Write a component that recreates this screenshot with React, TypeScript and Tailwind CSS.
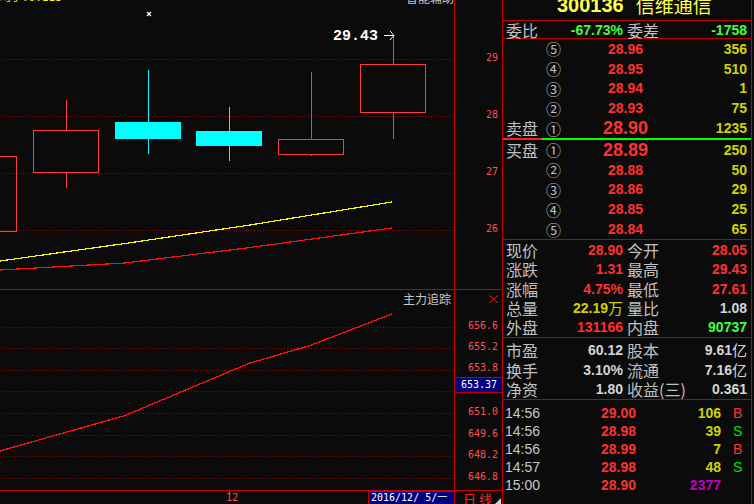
import React from "react";

const NUM = "font-['Liberation_Sans',sans-serif] font-bold text-[14px] leading-none";
const CJK = "font-['Noto_Sans_CJK_SC',sans-serif] text-[16px] leading-none text-[#c0c0c0]";
const AXIS = "font-['DejaVu_Sans_Mono',monospace] text-[10px] leading-none text-[#ff5050]";

type Order = { n: string; p: string; v: string; label?: string; big?: boolean };

const sells: Order[] = [
  { n: "⑤", p: "28.96", v: "356" },
  { n: "④", p: "28.95", v: "510" },
  { n: "③", p: "28.94", v: "1" },
  { n: "②", p: "28.93", v: "75" },
  { n: "①", p: "28.90", v: "1235", label: "卖盘", big: true },
];
const buys: Order[] = [
  { n: "①", p: "28.89", v: "250", label: "买盘", big: true },
  { n: "②", p: "28.88", v: "50" },
  { n: "③", p: "28.86", v: "29" },
  { n: "④", p: "28.85", v: "25" },
  { n: "⑤", p: "28.84", v: "65" },
];

const RED = "text-[#ff3030]";
const YEL = "text-[#d2d200]";
const GRN = "text-[#40ff40]";
const WHT = "text-[#d4d4d4]";

type Stat = { l1: string; v1: string; c1: string; u1?: string; l2: string; v2: string; c2: string; u2?: string };

const stats1: Stat[] = [
  { l1: "现价", v1: "28.90", c1: RED, l2: "今开", v2: "28.05", c2: RED },
  { l1: "涨跌", v1: "1.31", c1: RED, l2: "最高", v2: "29.43", c2: RED },
  { l1: "涨幅", v1: "4.75%", c1: RED, l2: "最低", v2: "27.61", c2: RED },
  { l1: "总量", v1: "22.19", u1: "万", c1: YEL, l2: "量比", v2: "1.08", c2: WHT },
  { l1: "外盘", v1: "131166", c1: RED, l2: "内盘", v2: "90737", c2: GRN },
];
const stats2: Stat[] = [
  { l1: "市盈", v1: "60.12", c1: WHT, l2: "股本", v2: "9.61", u2: "亿", c2: WHT },
  { l1: "换手", v1: "3.10%", c1: WHT, l2: "流通", v2: "7.16", u2: "亿", c2: WHT },
  { l1: "净资", v1: "1.80", c1: WHT, l2: "收益(三)", v2: "0.361", c2: WHT },
];

const ticks = [
  { t: "14:56", p: "29.00", v: "106", vc: YEL, s: "B", sc: "text-[#ff3030]" },
  { t: "14:56", p: "28.98", v: "39", vc: YEL, s: "S", sc: "text-[#00e000]" },
  { t: "14:56", p: "28.99", v: "7", vc: YEL, s: "B", sc: "text-[#ff3030]" },
  { t: "14:57", p: "28.98", v: "48", vc: YEL, s: "S", sc: "text-[#00e000]" },
  { t: "15:00", p: "28.90", v: "2377", vc: "text-[#c000c0]", s: "", sc: "" },
];

function OrderRow({ o }: { o: Order }) {
  return (
    <div className="flex flex-1 items-center pl-[3px] pr-[4px]">
      <span className={`${CJK} w-[40px]`}>{o.label ?? ""}</span>
      <span className="w-[15px] font-['Noto_Sans_CJK_SC',sans-serif] text-[15px] leading-none text-[#c0c0c0]">{o.n}</span>
      {o.big ? (
        <span className="w-[87px] text-right font-['Liberation_Sans',sans-serif] font-bold text-[18px] leading-none text-[#ff3030]">{o.p}</span>
      ) : (
        <span className={`${NUM} w-[82px] text-right ${RED}`}>{o.p}</span>
      )}
      <span className={`${NUM} flex-1 text-right ${YEL}`}>{o.v}</span>
    </div>
  );
}

function StatRow({ s }: { s: Stat }) {
  return (
    <div className="flex flex-1 items-center pl-[3px] pr-[4px]">
      <span className={`${CJK} w-[36px]`}>{s.l1}</span>
      <span className={`w-[81px] flex items-center justify-end ${s.c1}`}>
        <span className={NUM}>{s.v1}</span>
        {s.u1 && <span className="font-['Noto_Sans_CJK_SC',sans-serif] text-[15px] leading-none">{s.u1}</span>}
      </span>
      <span className={`${CJK} ml-[4px]`}>{s.l2}</span>
      <span className={`flex-1 flex items-center justify-end ${s.c2}`}>
        <span className={NUM}>{s.v2}</span>
        {s.u2 && <span className="font-['Noto_Sans_CJK_SC',sans-serif] text-[15px] leading-none">{s.u2}</span>}
      </span>
    </div>
  );
}

const candleRed = "#ff3b3b";
const cyan = "#00ffff";

function TopChart() {
  return (
    <div className="relative w-[454px] h-full overflow-hidden">
      <svg width="454" height="289" className="absolute left-0 top-0" shapeRendering="crispEdges">
        {[59, 116, 173, 230].map((y) => (
          <line key={y} x1={2} x2={454} y1={y + 0.5} y2={y + 0.5} stroke="#b00000" strokeDasharray="1 2" />
        ))}
        {/* candle 1 partial */}
        <rect x={-10} y={156.5} width={25.5 + 0.5} height={74.5} fill="none" stroke={candleRed} />
        {/* candle 2 */}
        <line x1={66.5} x2={66.5} y1={100} y2={130} stroke={candleRed} />
        <line x1={66.5} x2={66.5} y1={172} y2={188} stroke={candleRed} />
        <rect x={33.5} y={130.5} width={65} height={42} fill="none" stroke={candleRed} />
        {/* candle 3 */}
        <line x1={148.5} x2={148.5} y1={70} y2={154} stroke={cyan} />
        <rect x={115} y={122} width={66} height={17} fill={cyan} />
        {/* candle 4 */}
        <line x1={229.5} x2={229.5} y1={107} y2={161} stroke={cyan} />
        <rect x={196} y={131} width={66} height={15} fill={cyan} />
        {/* candle 5 */}
        <line x1={311.5} x2={311.5} y1={72} y2={139} stroke={candleRed} />
        <line x1={311.5} x2={311.5} y1={154} y2={156} stroke={candleRed} />
        <rect x={278.5} y={139.5} width={65} height={15} fill="none" stroke={candleRed} />
        {/* candle 6 */}
        <line x1={393.5} x2={393.5} y1={35} y2={64} stroke={candleRed} />
        <line x1={393.5} x2={393.5} y1={112} y2={139} stroke={candleRed} />
        <rect x={360.5} y={64.5} width={65} height={48} fill="none" stroke={candleRed} />
        {/* MA lines */}
        <polyline points="0,261 125,243.5 250,225 392,202" fill="none" stroke="#ffff00" strokeWidth={1.2} />
        <polyline points="0,270 125,263 250,247.5 392,228" fill="none" stroke="#ff1010" strokeWidth={1.2} />
        {/* arrow */}
        <line x1={384} x2={394} y1={35.5} y2={35.5} stroke="#ffffff" />
        <line x1={390} x2={394} y1={31} y2={35.5} stroke="#ffffff" shapeRendering="auto" />
        <line x1={390} x2={394} y1={40} y2={35.5} stroke="#ffffff" shapeRendering="auto" />
        {/* small cross */}
        <line x1={147} x2={151} y1={12} y2={16} stroke="#ffffff" shapeRendering="auto" strokeWidth={1.3} />
        <line x1={151} x2={147} y1={12} y2={16} stroke="#ffffff" shapeRendering="auto" strokeWidth={1.3} />
      </svg>
      <span className="absolute left-0 top-[-8px] font-['DejaVu_Sans_Mono','Noto_Sans_CJK_SC',monospace] text-[11px] leading-[12px] text-[#ffff00]">
        均手:0.118
      </span>
      <span className="absolute left-[406px] top-[-8px] font-['Noto_Sans_CJK_SC',sans-serif] text-[12px] leading-[12px] text-[#c8c8c8]">
        智能辅助
      </span>
      <span className="absolute left-[333px] top-[29px] font-['Liberation_Mono',monospace] font-bold text-[15px] leading-[15px] text-white">
        29.43
      </span>
    </div>
  );
}

function TopAxis() {
  const labels = [
    { t: "29", y: 58 },
    { t: "28", y: 115 },
    { t: "27", y: 172 },
    { t: "26", y: 229 },
  ];
  return (
    <div className="relative w-[48px] h-full border-l border-[#c80000]">
      {labels.map((l) => (
        <span key={l.t} className={`${AXIS} absolute right-[4px]`} style={{ top: l.y - 5 }}>
          {l.t}
        </span>
      ))}
    </div>
  );
}

function IndChart() {
  const ys = [37, 58, 80, 101, 123, 145, 166, 188];
  return (
    <div className="relative w-[454px] h-full overflow-hidden">
      <svg width="454" height="200" className="absolute left-0 top-0" shapeRendering="crispEdges">
        {ys.map((y) => (
          <line key={y} x1={2} x2={454} y1={y + 0.5} y2={y + 0.5} stroke="#b00000" strokeDasharray="1 2" />
        ))}
        <polyline points="0,161 125,125.5 250,73 310,55.5 392,24" fill="none" stroke="#ff1010" strokeWidth={1.3} />
      </svg>
      <span className="absolute left-[403px] top-[3px] font-['Noto_Sans_CJK_SC',sans-serif] text-[12px] leading-[12px] text-[#c8c8c8]">
        主力追踪
      </span>
    </div>
  );
}

function IndAxis() {
  const labels = [
    { t: "656.6", y: 36 },
    { t: "655.2", y: 57 },
    { t: "653.8", y: 78 },
    { t: "652.4", y: 100 },
    { t: "651.0", y: 122 },
    { t: "649.6", y: 144 },
    { t: "648.2", y: 165 },
    { t: "646.8", y: 187 },
  ];
  return (
    <div className="relative w-[48px] h-full border-l border-[#c80000]">
      <svg width="10" height="9" className="absolute left-[34px] top-[5px]">
        <line x1={0.5} y1={0.5} x2={9} y2={8} stroke="#ff2020" />
        <line x1={9} y1={0.5} x2={0.5} y2={8} stroke="#ff2020" />
      </svg>
      {labels.map((l) => (
        <span key={l.t} className={`${AXIS} absolute right-[4px]`} style={{ top: l.y - 5 }}>
          {l.t}
        </span>
      ))}
      <div className="absolute left-[1px] right-0 top-[87px] h-[16px] bg-[#000080] border-y border-[#c00000] flex items-center justify-center">
        <span className="font-['DejaVu_Sans_Mono',monospace] text-[10px] leading-none text-white">653.37</span>
      </div>
    </div>
  );
}

export default function App() {
  return (
    <div className="w-[754px] h-[504px] bg-[#0b0b0b] flex overflow-hidden select-none">
      {/* left */}
      <div className="w-[502px] flex flex-col">
        <div className="flex h-[290px] border-b border-[#c80000]">
          <TopChart />
          <TopAxis />
        </div>
        <div className="flex h-[201px] border-b border-[#c80000]">
          <IndChart />
          <IndAxis />
        </div>
        <div className="flex h-[13px]">
          <div className="relative w-[454px] h-full">
            <div className="absolute left-[229px] top-0 w-[1px] h-[2px] bg-[#ff5050]" />
            <span className={`${AXIS} absolute left-[226px] top-[2px]`}>12</span>
            <div className="absolute left-[368px] top-0 w-[86px] h-[13px] bg-[#000080] border-l border-t border-[#c80000] flex items-center pl-[2px]">
              <span className="font-['DejaVu_Sans_Mono','Noto_Sans_CJK_SC',monospace] text-[10px] leading-none text-white whitespace-pre">
                2016/12/ 5/一
              </span>
            </div>
          </div>
          <div className="relative w-[48px] h-full border-l border-[#c80000] flex items-start pl-[8px]">
            <span className="font-['Noto_Sans_CJK_SC',sans-serif] text-[13px] leading-[13px] text-[#ff2020] whitespace-pre mt-[1px]">
              日 线
            </span>
            <svg width="6" height="6" className="absolute right-[1px] bottom-0">
              <polygon points="6,0 6,6 0,6" fill="#d0d0d0" />
            </svg>
          </div>
        </div>
      </div>

      {/* right panel */}
      <div className="w-[250px] h-full flex flex-col border-l border-r border-[#c80000]">
        <div className="h-[21px] border-b border-[#c00000] overflow-hidden flex items-start pl-[54px]">
          <span className="-mt-[5px] font-['Liberation_Sans','Noto_Sans_CJK_SC',sans-serif] font-bold text-[20px] leading-[20px] text-[#ffff50] whitespace-pre">
            300136
          </span>
          <span className="-mt-[5px] ml-[12px] font-['Noto_Sans_CJK_SC',sans-serif] text-[19px] leading-[20px] text-[#ffff50]">
            信维通信
          </span>
        </div>
        <div className="h-[18px] border-b border-[#c00000] flex items-center pl-[3px] pr-[4px]">
          <span className={`${CJK} w-[36px]`}>委比</span>
          <span className={`${NUM} w-[81px] text-right ${GRN}`}>-67.73%</span>
          <span className={`${CJK} ml-[4px]`}>委差</span>
          <span className={`${NUM} flex-1 text-right ${GRN}`}>-1758</span>
        </div>
        <div className="h-[99px] flex flex-col">
          {sells.map((o, i) => (
            <OrderRow key={i} o={o} />
          ))}
        </div>
        <div className="h-[2px] flex">
          <div className="w-[39px] bg-[#ff2020]" />
          <div className="flex-1 bg-[#00ff00]" />
        </div>
        <div className="h-[100px] border-b border-[#c00000] flex flex-col">
          {buys.map((o, i) => (
            <OrderRow key={i} o={o} />
          ))}
        </div>
        <div className="h-[98px] border-b border-[#c00000] flex flex-col">
          {stats1.map((s, i) => (
            <StatRow key={i} s={s} />
          ))}
        </div>
        <div className="h-[62px] pt-[2px] border-b border-[#c00000] flex flex-col">
          {stats2.map((s, i) => (
            <StatRow key={i} s={s} />
          ))}
        </div>
        <div className="flex flex-col pt-[4px]">
          {ticks.map((t, i) => (
            <div key={i} className="h-[18px] flex items-center pl-[2px]">
              <span className="w-[40px] font-['Liberation_Sans',sans-serif] text-[14px] leading-none text-[#c8c8c8]">{t.t}</span>
              <span className={`${NUM} w-[91px] text-right ${RED}`}>{t.p}</span>
              <span className={`${NUM} w-[85px] text-right ${t.vc}`}>{t.v}</span>
              <span className={`ml-[12px] font-['Liberation_Sans',sans-serif] text-[14px] leading-none ${t.sc}`}>{t.s}</span>
            </div>
          ))}
        </div>
      </div>
    </div>
  );
}
